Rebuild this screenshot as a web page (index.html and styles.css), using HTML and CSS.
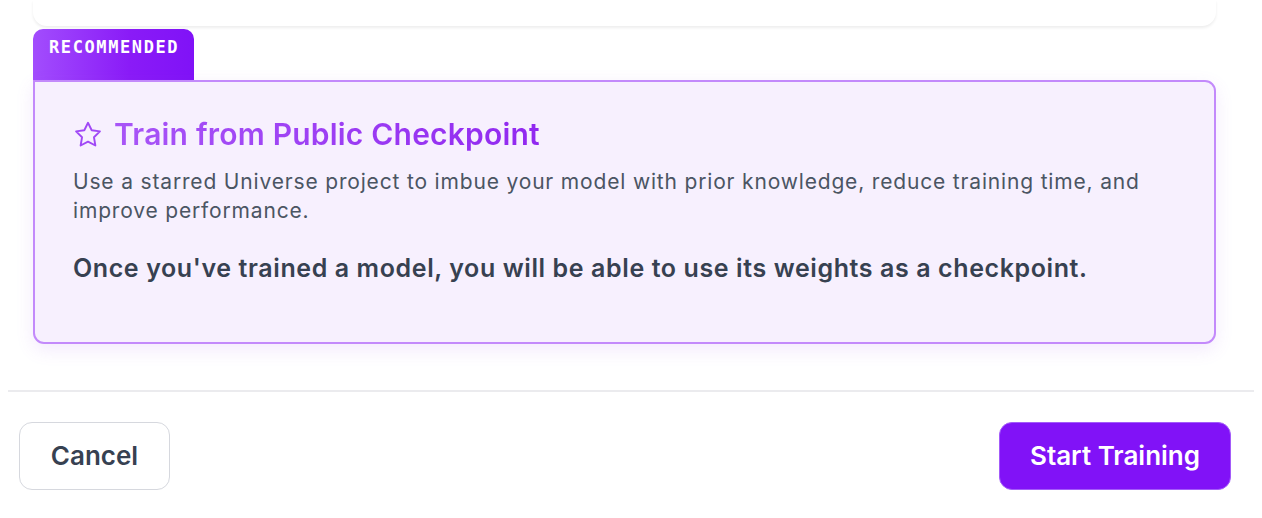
FILE: index.html
```html
<!DOCTYPE html>
<html lang="en">
<head>
<meta charset="utf-8">
<title>Train</title>
<link rel="stylesheet" href="styles.css">
</head>
<body>
<div class="modal">
  <div class="content">
    <div class="prev-card"></div>
    <div class="option">
      <div class="tab">RECOMMENDED</div>
      <div class="card">
        <div class="title-row">
          <svg class="star" viewBox="0 0 24 24" width="30" height="30" fill="none" stroke="currentColor" stroke-width="1.5" stroke-linejoin="round" stroke-linecap="round"><path d="M12 2.2l2.95 6 6.6.95-4.78 4.66 1.13 6.58L12 17.28l-5.9 3.1 1.13-6.57L2.45 9.15l6.6-.95z"/></svg>
          <h2 class="title">Train from Public Checkpoint</h2>
        </div>
        <p class="desc">Use a starred Universe project to imbue your model with prior knowledge, reduce training time, and improve performance.</p>
        <p class="note">Once you've trained a model, you will be able to use its weights as a checkpoint.</p>
      </div>
    </div>
  </div>
  <div class="footer">
    <button class="btn btn-cancel">Cancel</button>
    <button class="btn btn-primary">Start Training</button>
  </div>
</div>
</body>
</html>
```
FILE: styles.css
```css
* { box-sizing: border-box; }
html, body { margin: 0; padding: 0; background: #ffffff; }
body { font-family: Inter, "Noto Sans", sans-serif; width: 1262px; height: 518px; overflow: hidden; }

.modal { display: flex; flex-direction: column; }

.content { padding: 0 46px 0 33px; display: flex; flex-direction: column; }

.prev-card {
  height: 26px;
  background: #fff;
  border-radius: 0 0 14px 14px;
  box-shadow: 0 2px 3px rgba(0,0,0,0.07);
}

.option { margin-top: 3px; display: flex; flex-direction: column; }

.tab {
  align-self: flex-start;
  width: 161px;
  height: 51px;
  padding: 8px 0 0 16px;
  border-radius: 10px 10px 0 0;
  background: linear-gradient(90deg, #a24dfd 0%, #8a1bf7 60%, #8012f7 100%);
  color: #fff;
  font-family: "DejaVu Sans Mono", "Liberation Mono", monospace;
  font-weight: bold;
  font-size: 17px;
  letter-spacing: 1.6px;
  line-height: 20px;
}

.card {
  height: 264px;
  background: #f7f0fe;
  border: 2px solid #c38afb;
  border-radius: 0 11px 11px 11px;
  box-shadow: 0 6px 18px rgba(160, 80, 240, 0.12);
  padding: 34px 38px 0 38px;
}

.title-row { display: flex; align-items: center; gap: 11px; }
.star { color: #a048f6; flex: none; margin-top: 1px; }
.title {
  margin: 0;
  font-size: 30px;
  font-weight: 600;
  line-height: 36px;
  background: linear-gradient(90deg, #a855f7, #9128f0);
  -webkit-background-clip: text;
  background-clip: text;
  color: transparent;
  letter-spacing: 0.2px;
}

.desc {
  margin: 15px 0 0 0;
  font-size: 21px;
  line-height: 29px;
  letter-spacing: 0.83px;
  color: #4b5563;
}

.note {
  margin: 27px 0 0 0;
  font-size: 25px;
  font-weight: 600;
  line-height: 32px;
  letter-spacing: 0.6px;
  color: #374151;
}

.footer {
  margin: 46px 8px 0 8px;
  border-top: 2px solid #ebebee;
  padding: 30px 23px 0 11px;
  display: flex;
  justify-content: space-between;
  align-items: center;
}

.btn {
  height: 68px;
  border-radius: 13px;
  padding-bottom: 3px;
  font-family: Inter, "Noto Sans", sans-serif;
  font-size: 26px;
  font-weight: 600;
  cursor: pointer;
}
.btn-cancel {
  width: 151px;
  background: #fff;
  border: 1px solid #d6d8de;
  color: #374151;
}
.btn-primary {
  width: 232px;
  background: #8112f7;
  border: 1px solid #a35bf9;
  color: #fff;
}
```
